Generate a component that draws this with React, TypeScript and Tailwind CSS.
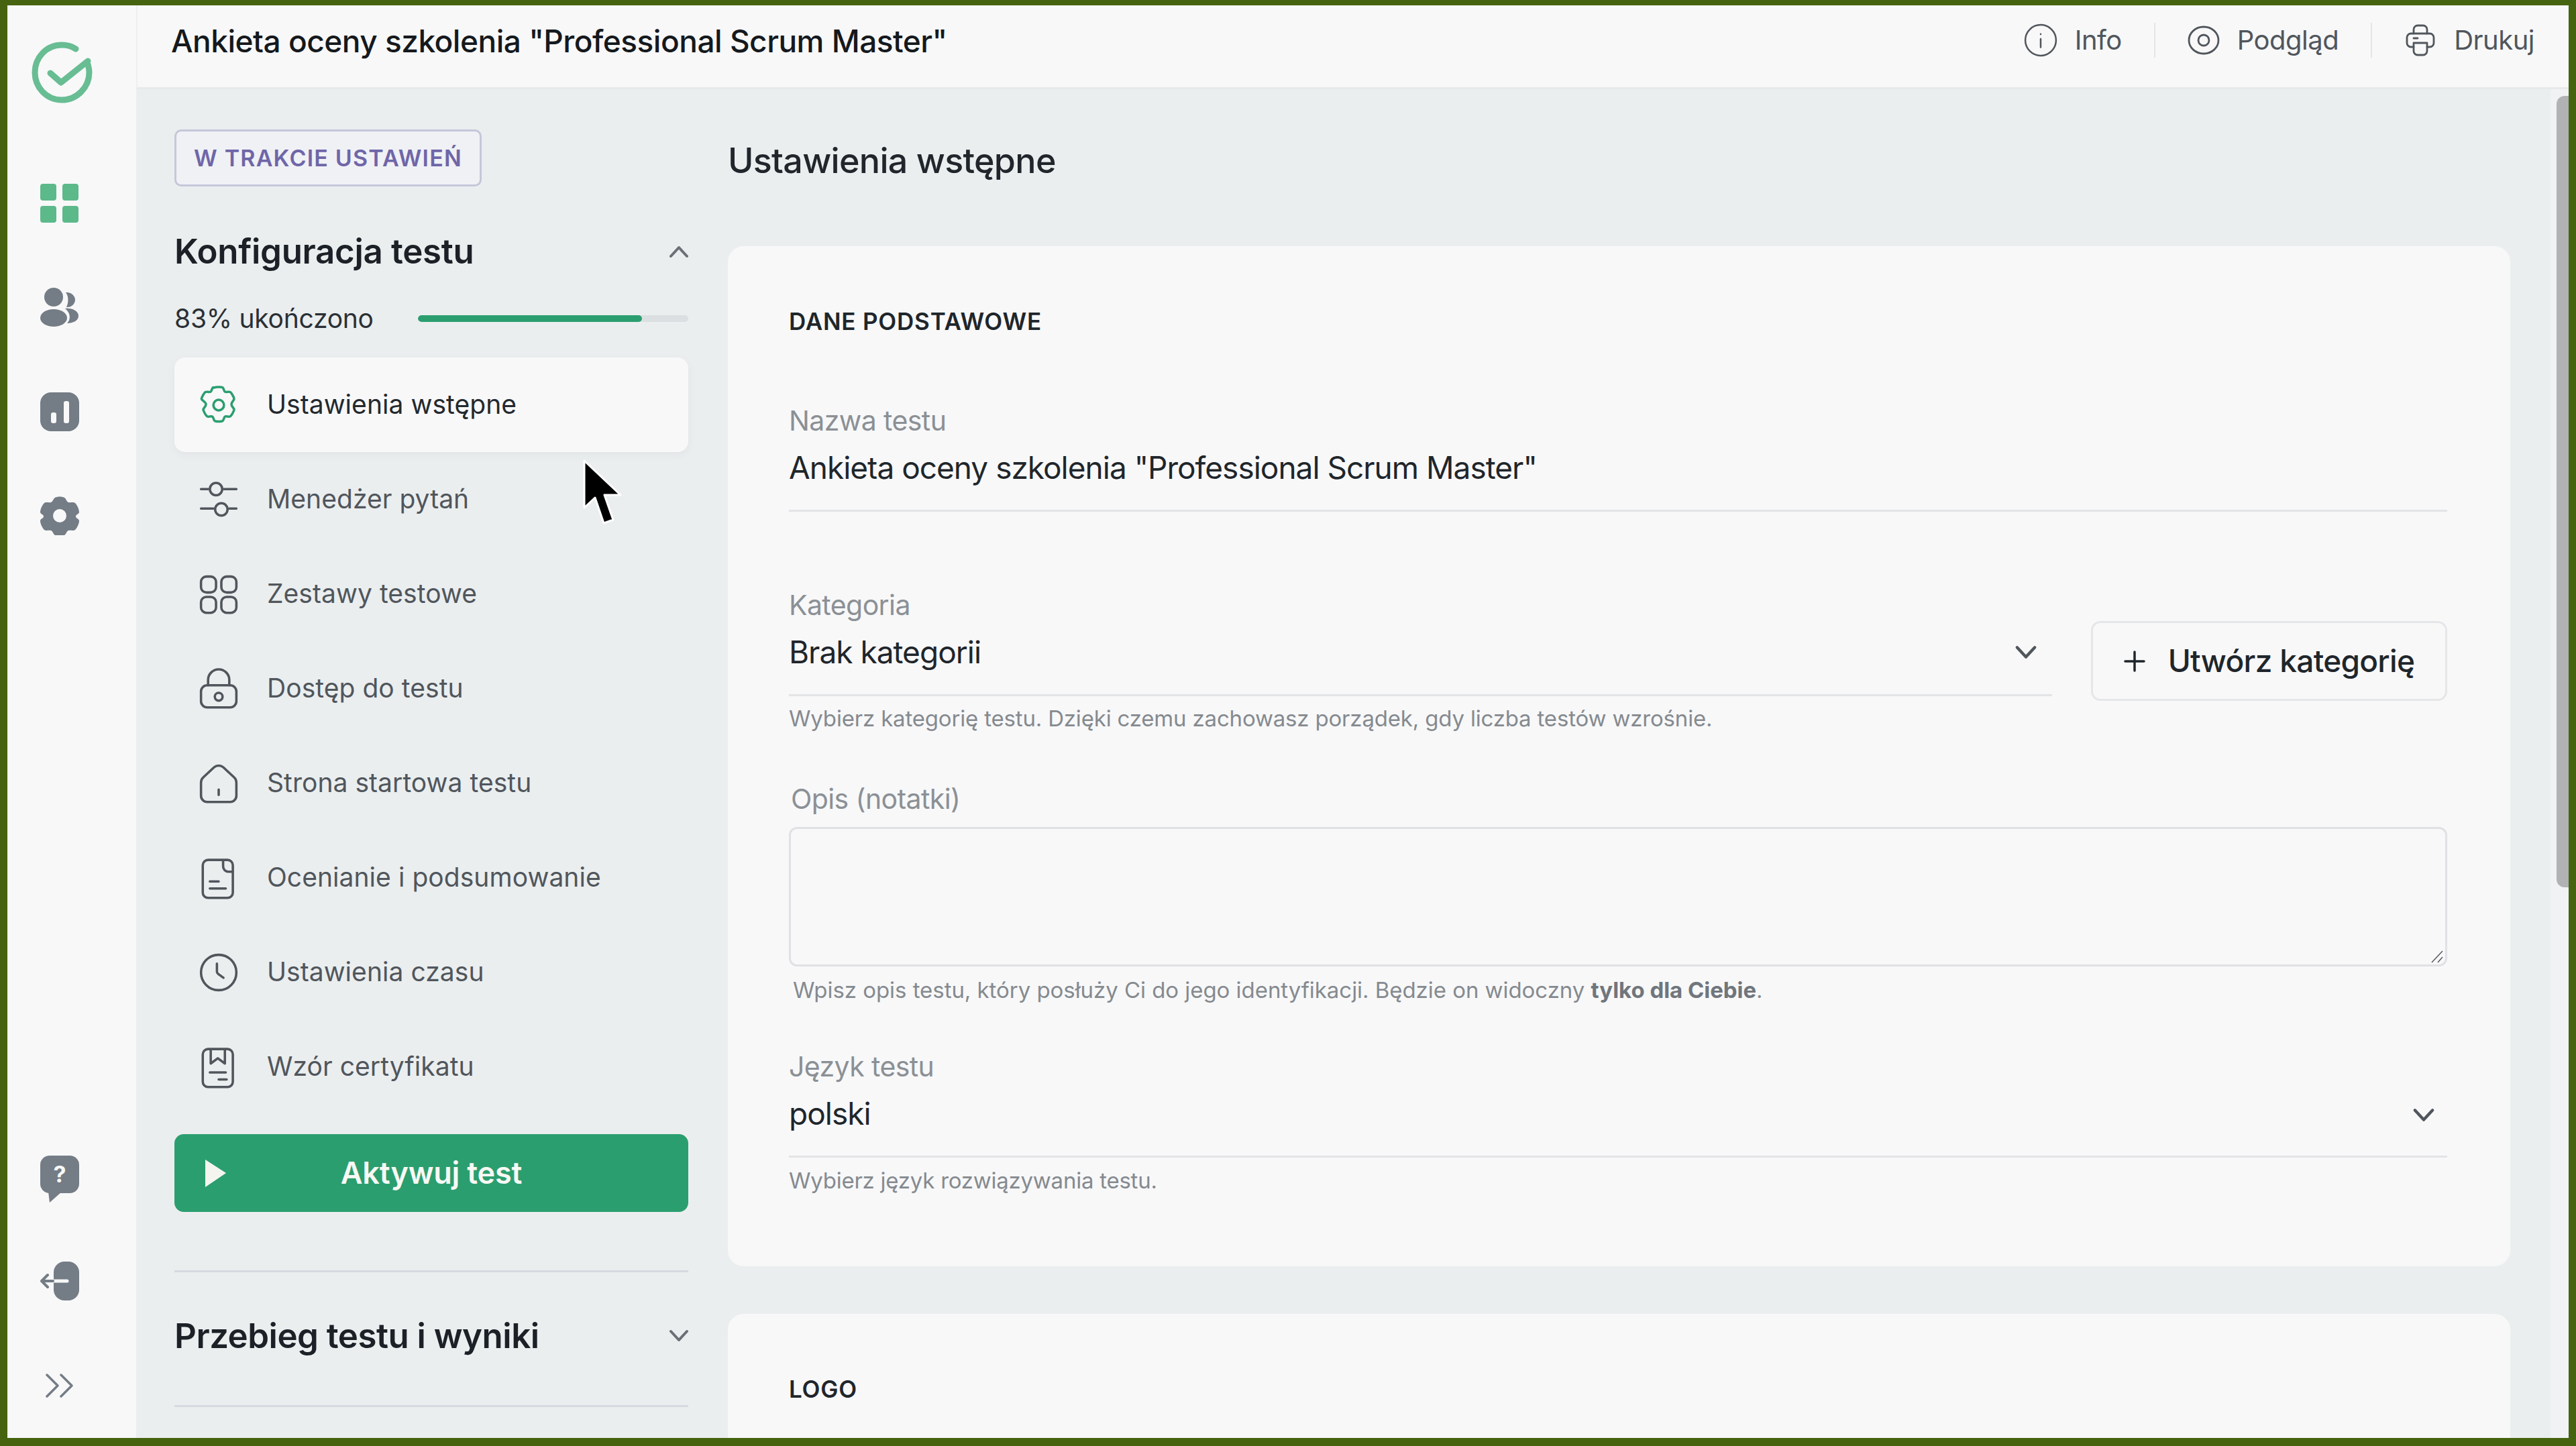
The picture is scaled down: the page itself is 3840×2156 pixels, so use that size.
const font = { fontFamily: "Inter, 'Noto Sans', sans-serif" };

type IconProps = { className?: string };

const Svg = ({ className, children }: IconProps & { children: React.ReactNode }) => (
  <svg viewBox="1 1 22 22" fill="none" stroke="currentColor" strokeWidth={1.35} strokeLinecap="round" strokeLinejoin="round" className={`overflow-visible ${className}`}>
    {children}
  </svg>
);

const Gear = (p: IconProps) => (
  <Svg {...p}>
    <circle cx="12" cy="12" r="3" />
    <path d="M9.7 2.1c.7-.5 3.900-.5 4.600 0 .6.500.6 2 1.300 2.400.8.400 2.100-.3 2.900.1.700.4 2.300 3.200 2.200 4-.1.800-1.500 1.600-1.500 2.900s1.400 2.100 1.500 2.900c.1.800-1.500 3.600-2.200 4-.8.400-2.100-.3-2.900.1-.7.400-.7 1.900-1.300 2.400-.7.500-3.900.5-4.600 0-.6-.5-.6-2-1.300-2.400-.8-.4-2.100.3-2.900-.1-.7-.4-2.300-3.200-2.200-4 .1-.8 1.500-1.600 1.500-2.900S2.400 9.300 2.300 8.600c-.1-.8 1.500-3.600 2.200-4 .8-.4 2.100.3 2.900-.1.700-.4.700-1.900 1.300-2.400Z" />
  </Svg>
);
const Sliders = (p: IconProps) => (
  <Svg {...p}>
    <path d="M2 6h4M15 6h7M2 17h7M18 17h4" />
    <circle cx="10.500" cy="6" r="3.500" />
    <circle cx="13.500" cy="17.500" r="3.500" />
  </Svg>
);
const Squares = (p: IconProps) => (
  <Svg {...p}>
    <rect x="2" y="2" width="8.500" height="9" rx="3" />
    <rect x="13.500" y="2" width="8.500" height="9" rx="3" />
    <rect x="2" y="13.500" width="8.500" height="9" rx="3" />
    <rect x="13.500" y="13.500" width="8.500" height="9" rx="3" />
  </Svg>
);
const Lock = (p: IconProps) => (
  <Svg {...p}>
    <rect x="2" y="10" width="20" height="12.500" rx="3.500" />
    <path d="M6 10V7a6 6 0 0 1 12 0v3" />
    <circle cx="12" cy="16.500" r="2.200" />
  </Svg>
);
const Home = (p: IconProps) => (
  <Svg {...p}>
    <path d="M2 11.500c0-1.200.5-2.200 1.400-3l6-5.600c1.500-1.300 3.700-1.300 5.200 0l6 5.600c.9.800 1.400 1.800 1.400 3V19a3.500 3.500 0 0 1-3.500 3.500h-13A3.500 3.500 0 0 1 2 19Z" />
    <path d="M12 15.500v3" />
  </Svg>
);
const Report = (p: IconProps) => (
  <Svg {...p}>
    <path d="M6 1.800h11a3 3 0 0 1 3 3v15.500a3 3 0 0 1-3 3H6a3 3 0 0 1-3-3V4.800a3 3 0 0 1 3-3Z" />
    <path d="M14.500 2v3.500a3 3 0 0 0 3 3H20M7 14h5M7 18h9" />
  </Svg>
);
const Clock = (p: IconProps) => (
  <Svg {...p}>
    <circle cx="12" cy="12" r="10" />
    <path d="M11 7v4.500c0 .500.300 1 .700 1.300l3 2.200" />
  </Svg>
);
const Cert = (p: IconProps) => (
  <Svg {...p}>
    <rect x="3" y="1.800" width="17" height="21.500" rx="3" />
    <path d="M7.500 2v8l4-3 4 3V2M7 15h9M12 19h4.500" />
  </Svg>
);

const items = [
  { label: "Ustawienia wstępne", icon: Gear },
  { label: "Menedżer pytań", icon: Sliders },
  { label: "Zestawy testowe", icon: Squares },
  { label: "Dostęp do testu", icon: Lock },
  { label: "Strona startowa testu", icon: Home },
  { label: "Ocenianie i podsumowanie", icon: Report },
  { label: "Ustawienia czasu", icon: Clock },
  { label: "Wzór certyfikatu", icon: Cert },
];

const Chevron = ({ up, className }: IconProps & { up?: boolean }) => (
  <svg viewBox="0 0 30 20" fill="none" stroke="currentColor" strokeWidth={4} strokeLinecap="round" strokeLinejoin="round" className={className}>
    <path d={up ? "M3 17 15 4l12 13" : "M3 3l12 13L27 3"} />
  </svg>
);

const RailIcons = {
  Logo: () => (
    <svg viewBox="0 0 91 92" fill="none" stroke="#68bd93" strokeWidth={9} strokeLinecap="round" strokeLinejoin="round" className="w-[91px] h-[92px]">
      <path d="M66 11C59 6 52 5 45 5 22 5 5 24 5 46s17 41 40 41 41-19 41-41c0-5-1-8-2-12" />
      <path d="M28 47l16 14 40-32" />
    </svg>
  ),
  Grid: () => (
    <svg viewBox="0 0 58 58" fill="#5cb98a" className="w-[58px] h-[58px]">
      <rect x="0" y="0" width="24" height="25" rx="4" />
      <rect x="33" y="0" width="24" height="25" rx="4" />
      <rect x="0" y="33" width="24" height="25" rx="4" />
      <rect x="33" y="33" width="24" height="25" rx="4" />
    </svg>
  ),
  People: () => (
    <svg viewBox="0 0 58 58" fill="#747c85" className="w-[58px] h-[58px]">
      <circle cx="20" cy="14" r="14" />
      <ellipse cx="20" cy="45" rx="20" ry="13" />
      <path d="M38 7c8-1 14 5 14 11s-6 12-13 11c3-6 4-16-1-22Z" />
      <path d="M37 31c11-1 20 4 20 11 0 7-8 11-17 11 6-6 5-16-3-22Z" />
    </svg>
  ),
  Chart: () => (
    <svg viewBox="0 0 58 58" className="w-[58px] h-[58px]">
      <rect x="0" y="0" width="58" height="58" rx="16" fill="#747c85" />
      <rect x="16" y="30" width="8" height="16" rx="3" fill="#f8f8f9" />
      <rect x="35" y="13" width="8" height="33" rx="3" fill="#f8f8f9" />
    </svg>
  ),
  Cog: () => (
    <svg viewBox="0 0 58 58" className="w-[58px] h-[58px]">
      <path fill="#747c85" fillRule="evenodd" d="M22 2c4-2 10-2 14 0 3 2 3 6 6 7 3 1 7-1 10 1 3 3 6 9 6 14-1 3-5 3-5 6s4 3 5 6c0 5-3 11-6 14-3 2-7 0-10 1-3 1-3 5-6 7-4 2-10 2-14 0-3-2-3-6-6-7-3-1-7 1-10-1-3-3-6-9-6-14 1-3 5-3 5-6s-4-3-5-6c0-5 3-11 6-14 3-2 7 0 10-1 3-1 3-5 6-7Zm7 17a10 10 0 1 0 0 20 10 10 0 0 0 0-20Z" />
    </svg>
  ),
  Help: () => (
    <div className="relative w-[58px] h-[56px] rounded-[14px] bg-[#747c85] flex items-center justify-center">
      <span className="text-[#f8f8f9] text-[34px] font-bold leading-none">?</span>
      <svg viewBox="0 0 20 16" className="absolute left-[12px] top-[54px] w-[20px] h-[16px]">
        <path d="M0 0h20L2 16Z" fill="#747c85" />
      </svg>
    </div>
  ),
  Exit: () => (
    <svg viewBox="0 0 58 58" className="w-[58px] h-[58px]">
      <rect x="20" y="0" width="38" height="58" rx="16" fill="#747c85" />
      <path d="M3 29h37" stroke="#f8f8f9" strokeWidth={5} strokeLinecap="round" />
      <path d="M3 29h16" stroke="#747c85" strokeWidth={4} strokeLinecap="round" />
      <path d="M11 20l-9 9 9 9" fill="none" stroke="#747c85" strokeWidth={4} strokeLinecap="round" strokeLinejoin="round" />
    </svg>
  ),
  Expand: () => (
    <svg viewBox="0 0 44 36" fill="none" stroke="#747c85" strokeWidth={3.500} strokeLinecap="round" strokeLinejoin="round" className="w-[44px] h-[36px]">
      <path d="M3 2l16 16L3 34M24 2l16 16-16 16" />
    </svg>
  ),
};

const Field = ({ label, value, className }: { label: string; value: string; className?: string }) => (
  <div className={className}>
    <div className="h-[50px] leading-[50px] text-[41px] text-[#8b9095] tracking-[-0.6px]">{label}</div>
    <div className="mt-[17px] h-[56px] leading-[56px] text-[46px] text-[#1f262b] tracking-[-1px]">{value}</div>
  </div>
);

export default function App() {
  return (
    <div style={font} className="relative w-[3840px] h-[2156px] overflow-hidden bg-[#46640f] pt-[8px] pl-[11px] pr-[11px] pb-[12px]">
      <div className="flex h-full overflow-hidden">
        {/* Rail */}
        <div className="w-[192px] shrink-0 bg-[#f8f8f9] flex flex-col items-center pr-[36px]">
          <div className="mt-[54px] ml-[7px]"><RailIcons.Logo /></div>
          <div className="mt-[120px]"><RailIcons.Grid /></div>
          <div className="mt-[97px]"><RailIcons.People /></div>
          <div className="mt-[98px]"><RailIcons.Chart /></div>
          <div className="mt-[97px]"><RailIcons.Cog /></div>
          <div className="mt-auto"><RailIcons.Help /></div>
          <div className="mt-[102px]"><RailIcons.Exit /></div>
          <div className="mt-[109px] mb-[60px]"><RailIcons.Expand /></div>
        </div>

        <div className="flex-1 min-w-0 flex flex-col">
          {/* Header */}
          <div className="h-[125px] shrink-0 bg-[#f8f8f9] border-b-[3px] border-[#e8e9ec] border-l-[2px] border-l-[#efeff1] flex items-start pl-[50px] pr-[51px]">
            <h1 className="mt-[25px] leading-[56px] text-[46px] font-medium text-[#15191d] tracking-[-0.5px]">Ankieta oceny szkolenia "Professional Scrum Master"</h1>
            <div className="ml-auto mt-[26px] h-[52px] flex items-center text-[40px] text-[#50565c] tracking-[-0.5px]">
              <svg viewBox="0 0 24 24" fill="none" stroke="currentColor" strokeWidth={1.200} strokeLinecap="round" className="w-[50px] h-[50px]">
                <circle cx="12" cy="12" r="11" />
                <path d="M12 11v6M12 7.500v.2" />
              </svg>
              <span className="ml-[26px]">Info</span>
              <div className="w-[2px] h-[52px] bg-[#e4e5e8] mx-[48px]" />
              <svg viewBox="0 0 24 24" fill="none" stroke="currentColor" strokeWidth={1.400} className="w-[48px] h-[48px]">
                <ellipse cx="12" cy="12" rx="11" ry="10" />
                <circle cx="12" cy="12" r="4" />
              </svg>
              <span className="ml-[26px]">Podgląd</span>
              <div className="w-[2px] h-[52px] bg-[#e4e5e8] mx-[48px]" />
              <svg viewBox="0 0 24 24" fill="none" stroke="currentColor" strokeWidth={1.400} strokeLinecap="round" strokeLinejoin="round" className="w-[48px] h-[50px]">
                <path d="M7 7V4a3 3 0 0 1 3-3h4a3 3 0 0 1 3 3v3" />
                <path d="M7 17H5a3 3 0 0 1-3-3v-4a3 3 0 0 1 3-3h14a3 3 0 0 1 3 3v4a3 3 0 0 1-3 3h-2" />
                <path d="M7 14h10v6a3 3 0 0 1-3 3h-4a3 3 0 0 1-3-3ZM7 10.500h3" />
              </svg>
              <span className="ml-[26px]">Drukuj</span>
            </div>
          </div>

          <div className="flex-1 min-h-0 flex overflow-hidden bg-[#ebeeef]">
            {/* Left panel */}
            <div className="w-[823px] shrink-0 pl-[57px] pt-[60px]">
              <div className="inline-flex items-center h-[85px] px-[26px] rounded-[10px] border-[3px] border-[#c6c6da] bg-[#f0f1f5] text-[34px] font-semibold text-[#6f66a8] tracking-[1.2px]">W TRAKCIE USTAWIEŃ</div>
              <div className="mt-[67px] h-[60px] flex items-center justify-between">
                <span className="text-[51px] font-semibold text-[#1b2126] tracking-[-0.3px]">Konfiguracja testu</span>
                <Chevron up className="w-[30px] h-[20px] mr-[-1px] text-[#6a7076]" />
              </div>
              <div className="mt-[45px] h-[50px] flex items-center">
                <span className="text-[39px] text-[#2a3035] tracking-[-0.25px]">83% ukończono</span>
                <div className="ml-auto w-[403px] h-[10px] rounded-full bg-[#dcdfe2] overflow-hidden">
                  <div className="w-[83%] h-full rounded-full bg-[#2b9e6f]" />
                </div>
              </div>
              <div className="mt-[33px] flex flex-col">
                {items.map((item, i) => (
                  <div
                    key={item.label}
                    className={i === 0
                      ? "h-[141px] flex items-center pl-[37px] rounded-[16px] bg-[#f8f8f9] text-[#23292e] shadow-[0_4px_12px_rgba(120,130,140,0.08)]"
                      : "h-[141px] flex items-center pl-[37px] text-[#50565c]"}
                  >
                    <item.icon className={i === 0 ? "w-[58px] h-[58px] text-[#2b9e6f]" : "w-[58px] h-[58px] text-[#50565c]"} />
                    <span className="ml-[43px] text-[39px] tracking-[0.05px]">{item.label}</span>
                  </div>
                ))}
              </div>
              <div className="relative mt-[30px] h-[116px] rounded-[14px] bg-[#2b9e6f] flex items-center justify-center text-[45px] font-semibold text-[#f8f8f4] tracking-[-0.2px]">
                <svg viewBox="0 0 31 41" className="absolute left-[46px] top-[38px] w-[31px] h-[41px]">
                  <path d="M0 0l31 20L0 41Z" fill="#f4f5ef" />
                </svg>
                Aktywuj test
              </div>
              <div className="mt-[87px] h-[3px] bg-[#d6d9df]" />
              <div className="mt-[65px] h-[60px] flex items-center justify-between">
                <span className="text-[51px] font-semibold text-[#1b2126] tracking-[-0.5px]">Przebieg testu i wyniki</span>
                <Chevron className="w-[30px] h-[20px] mr-[-1px] text-[#6a7076]" />
              </div>
              <div className="mt-[73px] h-[3px] bg-[#d6d9df]" />
            </div>

            {/* Content */}
            <div className="flex-1 min-w-0 pl-[59px] pr-[60px] pt-[77px]">
              <h2 className="h-[60px] leading-[60px] text-[52px] font-medium text-[#20262b] tracking-[-0.7px]">Ustawienia wstępne</h2>
              <div className="mt-[97px] rounded-[24px] bg-[#f8f8f9] pt-[90px] pl-[91px] pr-[94px] pb-[106px]">
                <div className="h-[44px] leading-[44px] text-[35px] font-semibold text-[#1f262b] tracking-[0.8px]">DANE PODSTAWOWE</div>
                <Field className="mt-[101px] pb-[35px] border-b-[3px] border-[#e3e4e6]" label="Nazwa testu" value={'Ankieta oceny szkolenia "Professional Scrum Master"'} />
                <div className="mt-[114px] flex items-start gap-[58px]">
                  <div className="flex-1 min-w-0">
                    <div className="relative pb-[35px] border-b-[3px] border-[#e3e4e6]">
                      <Field label="Kategoria" value="Brak kategorii" />
                      <Chevron className="absolute right-[22px] top-[85px] w-[34px] h-[22px] text-[#50565c]" />
                    </div>
                    <div className="mt-[11px] h-[44px] leading-[44px] text-[33px] text-[#858a8f] tracking-[-0.18px]">Wybierz kategorię testu. Dzięki czemu zachowasz porządek, gdy liczba testów wzrośnie.</div>
                  </div>
                  <div className="mt-[49px] w-[531px] h-[119px] shrink-0 rounded-[14px] border-[3px] border-[#e5e6e8] flex items-center justify-center text-[46px] font-medium text-[#1f262b] tracking-[-0.7px]">
                    <svg viewBox="0 0 32 32" fill="none" stroke="currentColor" strokeWidth={3.500} strokeLinecap="round" className="w-[32px] h-[32px] mr-[34px]">
                      <path d="M16 2v28M2 16h28" />
                    </svg>
                    Utwórz kategorię
                  </div>
                </div>
                <div className="mt-[73px] pl-[3px] h-[50px] leading-[50px] text-[41px] text-[#8b9095] tracking-[-0.6px]">Opis (notatki)</div>
                <div className="relative mt-[17px] h-[208px] rounded-[12px] border-[3px] border-[#e0e1e4]">
                  <svg viewBox="0 0 20 20" fill="none" stroke="#55595e" strokeWidth={1.500} className="absolute right-[2px] bottom-[2px] w-[20px] h-[20px]">
                    <path d="M2 19 18 2M11 19l7-8" />
                  </svg>
                </div>
                <div className="mt-[13px] pl-[6px] h-[44px] leading-[44px] text-[33px] text-[#858a8f] tracking-[-0.05px]">Wpisz opis testu, który posłuży Ci do jego identyfikacji. Będzie on widoczny <b className="font-bold text-[#70767c]">tylko dla Ciebie</b>.</div>
                <div className="relative mt-[67px] pb-[35px] border-b-[3px] border-[#e3e4e6]">
                  <Field label="Język testu" value="polski" />
                  <Chevron className="absolute right-[18px] top-[87px] w-[34px] h-[22px] text-[#50565c]" />
                </div>
                <div className="mt-[12px] h-[44px] leading-[44px] text-[33px] text-[#858a8f] tracking-[-0.25px]">Wybierz język rozwiązywania testu.</div>
              </div>
              <div className="mt-[71px] h-[400px] rounded-[24px] bg-[#f8f8f9] pt-[90px] pl-[91px]">
                <div className="h-[44px] leading-[44px] text-[35px] font-semibold text-[#1f262b] tracking-[0.8px]">LOGO</div>
              </div>
            </div>

            {/* Scrollbar */}
            <div className="w-[27px] shrink-0 bg-[#f1f2f4] pl-[9px] pt-[10px]">
              <div className="h-[1180px] rounded-tl-[12px] rounded-bl-[12px] bg-[#b1b2b3]" />
            </div>
          </div>
        </div>
      </div>

      {/* Mouse cursor */}
      <svg viewBox="0 0 60 102" className="absolute left-[866px] top-[684px] w-[62px] h-[102px]">
        <path d="M4 3v70l16-15 13 38 14-5-13-37h24Z" fill="#000" stroke="#fff" strokeWidth={3} strokeLinejoin="round" />
      </svg>
    </div>
  );
}
